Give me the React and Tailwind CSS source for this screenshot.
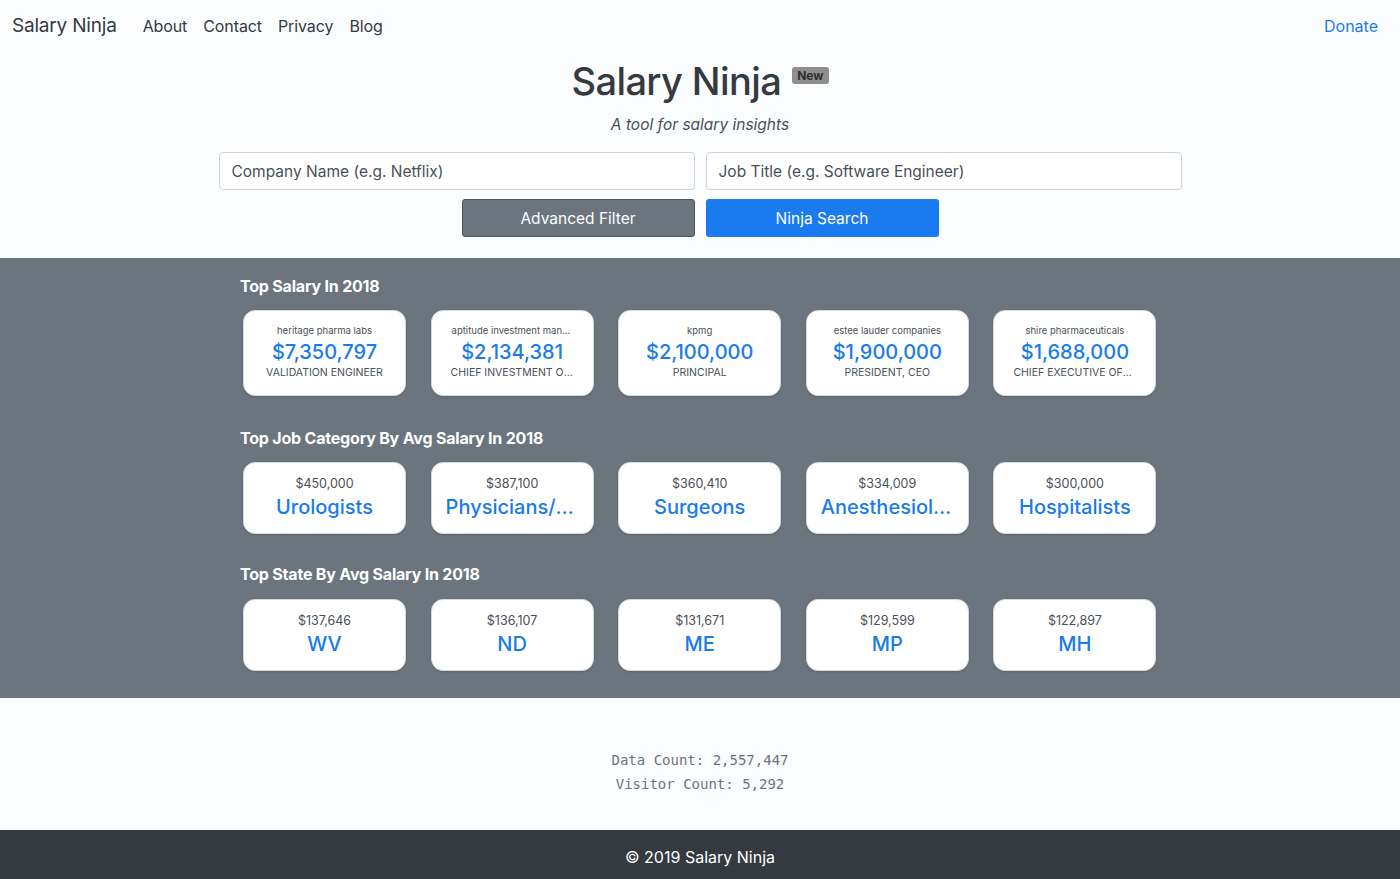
import React from "react";

const topSalary = [
  { company: "heritage pharma labs", amount: "$7,350,797", title: "VALIDATION ENGINEER" },
  { company: "aptitude investment management", amount: "$2,134,381", title: "CHIEF INVESTMENT OFFICER" },
  { company: "kpmg", amount: "$2,100,000", title: "PRINCIPAL" },
  { company: "estee lauder companies", amount: "$1,900,000", title: "PRESIDENT, CEO" },
  { company: "shire pharmaceuticals", amount: "$1,688,000", title: "CHIEF EXECUTIVE OFFICER" },
];

const topCategory = [
  { amount: "$450,000", name: "Urologists" },
  { amount: "$387,100", name: "Physicians/Surgeons" },
  { amount: "$360,410", name: "Surgeons" },
  { amount: "$334,009", name: "Anesthesiologists" },
  { amount: "$300,000", name: "Hospitalists" },
];

const topState = [
  { amount: "$137,646", name: "WV" },
  { amount: "$136,107", name: "ND" },
  { amount: "$131,671", name: "ME" },
  { amount: "$129,599", name: "MP" },
  { amount: "$122,897", name: "MH" },
];

function Card({ children, h }) {
  return (
    <div className={`ml-[3px] w-[163px] ${h} bg-white rounded-[12px] border border-[#d6d8db] shadow-[0_1px_2px_rgba(0,0,0,0.15)] flex flex-col items-center justify-center`}>
      {children}
    </div>
  );
}

export default function App() {
  return (
    <div className="min-h-[879px] flex flex-col bg-[#fbfcfe] text-[#343a40]" style={{ fontFamily: "Inter, 'Noto Sans', sans-serif" }}>
      {/* Navbar */}
      <nav className="h-[52px] flex items-center px-3">
        <span className="text-[19px] tracking-[-0.2px] mr-[26px]">Salary Ninja</span>
        <div className="flex gap-[16px] text-[16px] tracking-[-0.1px]">
          <span>About</span>
          <span>Contact</span>
          <span>Privacy</span>
          <span>Blog</span>
        </div>
        <span className="ml-auto mr-[10px] text-[16px] text-[#1a7bea]">Donate</span>
      </nav>

      {/* Hero */}
      <div className="flex flex-col items-center">
        <div className="flex items-start mt-[3px]">
          <h1 className="text-[38px] leading-[52px] font-medium tracking-[-0.6px]">Salary Ninja</h1>
          <span className="ml-[11px] mt-[12px] bg-[#8e8e8e] text-[#2f2f2f] text-[12px] font-bold px-[5px] py-[1px] rounded-[3px] leading-[15px]">New</span>
        </div>
        <p className="italic text-[15.5px] text-[#495057] mt-[6px]">A tool for salary insights</p>
        <div className="flex gap-[11px] mt-[16px]">
          <div className="w-[476px] h-[38px] border border-[#ced4da] rounded-[4px] bg-white flex items-center px-[12px] text-[15.5px] text-[#495057]">Company Name (e.g. Netflix)</div>
          <div className="w-[476px] h-[38px] border border-[#ced4da] rounded-[4px] bg-white flex items-center px-[12px] text-[15.5px] text-[#495057]">Job Title (e.g. Software Engineer)</div>
        </div>
        <div className="flex gap-[11px] mt-[9px] mb-[21px]">
          <div className="w-[233px] h-[38px] rounded-[3px] bg-[#6c757d] border border-[#4e555b] text-white text-[15.5px] flex items-center justify-center">Advanced Filter</div>
          <div className="w-[233px] h-[38px] rounded-[3px] bg-[#1a7bf0] text-white text-[15.5px] flex items-center justify-center">Ninja Search</div>
        </div>
      </div>

      {/* Gray section */}
      <section className="bg-[#6c757d] h-[440px] flex justify-center">
        <div className="w-[938px] ml-[18px] pt-[16px]">
          <h2 className="text-white font-bold text-[16px] leading-[24px] tracking-[-0.2px]">Top Salary In 2018</h2>
          <div className="grid grid-cols-5 mt-[12px]">
            {topSalary.map((c) => (
              <Card key={c.amount} h="h-[86px]">
                <div className="text-[9.5px] text-[#495057] w-full text-center truncate leading-[12px] px-[20px] mt-[-2px]">{c.company}</div>
                <div className="text-[20px] text-[#1a7bea] font-medium leading-[28px] mt-[1px] whitespace-nowrap">{c.amount}</div>
                <div className="text-[10.5px] text-[#495057] w-full text-center truncate leading-[14px] px-[19px]">{c.title}</div>
              </Card>
            ))}
          </div>
          <h2 className="text-white font-bold text-[16px] leading-[24px] tracking-[-0.2px] mt-[30px]">Top Job Category By Avg Salary In 2018</h2>
          <div className="grid grid-cols-5 mt-[12px]">
            {topCategory.map((c) => (
              <Card key={c.amount} h="h-[72px]">
                <div className="text-[12.5px] text-[#495057] leading-[16px]">{c.amount}</div>
                <div className="text-[20px] text-[#1a7bea] font-medium leading-[28px] w-full text-center truncate mt-[1px] px-[14px]">{c.name}</div>
              </Card>
            ))}
          </div>
          <h2 className="text-white font-bold text-[16px] leading-[24px] tracking-[-0.2px] mt-[28px]">Top State By Avg Salary In 2018</h2>
          <div className="grid grid-cols-5 mt-[13px]">
            {topState.map((c) => (
              <Card key={c.amount} h="h-[72px]">
                <div className="text-[12.5px] text-[#495057] leading-[16px]">{c.amount}</div>
                <div className="text-[20px] text-[#1a7bea] font-medium leading-[28px] mt-[1px]">{c.name}</div>
              </Card>
            ))}
          </div>
        </div>
      </section>

      {/* Counts */}
      <section className="h-[132px] flex flex-col items-center justify-center pt-[16px] text-[#6c757d] text-[14px] leading-[24px]" style={{ fontFamily: "'DejaVu Sans Mono', monospace" }}>
        <div>Data Count: 2,557,447</div>
        <div>Visitor Count: 5,292</div>
      </section>

      {/* Footer */}
      <footer className="h-[49px] bg-[#343a40] text-white text-[16px] flex items-center justify-center pt-[4px]">© 2019 Salary Ninja</footer>
    </div>
  );
}
